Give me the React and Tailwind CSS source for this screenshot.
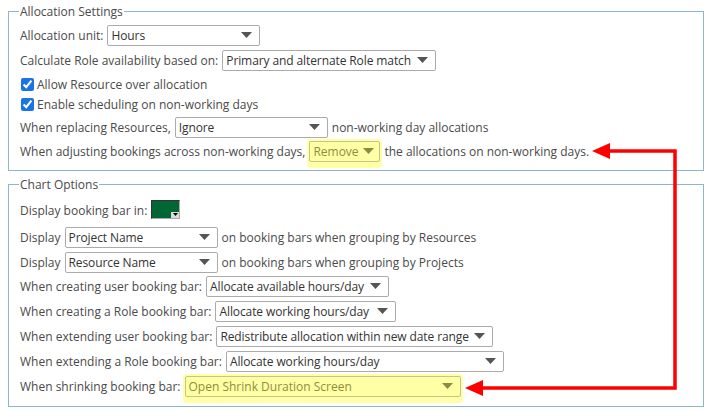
import React from "react";

function Arrow({ color }) {
  return (
    <svg width="11" height="6" viewBox="0 0 11 6" className="ml-[4px] shrink-0">
      <path d="M0 0 L11 0 L5.5 6 Z" fill={color} />
    </svg>
  );
}

function Select({ value, w, hl }) {
  if (hl) {
    return (
      <div
        className={`flex h-[21px] shrink-0 items-center justify-between rounded-[2px] border border-[#c4c48c] bg-[#ffffa6] pl-[3px] pr-[7px] text-[#8e8e3e] shadow-[0_0_0_2px_#ffffa6,0_4px_0_2px_#ffffa6] ${w}`}
      >
        <span className="whitespace-nowrap">{value}</span>
        <Arrow color="#8a8a45" />
      </div>
    );
  }
  return (
    <div
      className={`flex h-[21px] shrink-0 items-center justify-between rounded-[2px] border border-[#ababab] bg-white pl-[3px] pr-[7px] text-[#333] ${w}`}
    >
      <span className="whitespace-nowrap tracking-[-0.1px]">{value}</span>
      <Arrow color="#555" />
    </div>
  );
}

function Row({ children, cls = "" }) {
  return (
    <div className={`flex h-[24px] items-center gap-[4px] whitespace-nowrap ${cls}`}>
      {children}
    </div>
  );
}

function Check({ label, cls = "" }) {
  return (
    <div className={`flex h-[20px] items-center gap-[3px] whitespace-nowrap ${cls}`}>
      <input
        type="checkbox"
        defaultChecked
        className="m-0 ml-[1px] h-[13px] w-[13px] accent-[#1a73e8]"
      />
      <span>{label}</span>
    </div>
  );
}

export default function App() {
  return (
    <div
      className="relative h-[411px] w-[717px] overflow-hidden bg-white text-[12px] leading-[17px] text-[#4a4a4a]"
      style={{ fontFamily: '"Open Sans", "Liberation Sans", sans-serif' }}
    >
      <div className="pl-[8px] pr-[13px] pt-[3px]">
        <fieldset className="border border-[#8db5cc] pb-[7px] pl-[11px] pr-[10px]">
          <legend className="ml-[-1px] px-[1px]">Allocation Settings</legend>
          <Row cls="mt-[3px]">
            <span>Allocation unit:</span>
            <Select value="Hours" w="w-[153px]" />
          </Row>
          <Row cls="mt-[1px]">
            <span>Calculate Role availability based on:</span>
            <Select value="Primary and alternate Role match" w="w-[214px]" />
          </Row>
          <Check label="Allow Resource over allocation" cls="mt-[2px]" />
          <Check label="Enable scheduling on non-working days" />
          <Row cls="mt-[1px]">
            <span>When replacing Resources,</span>
            <Select value="Ignore" w="w-[153px]" />
            <span>non-working day allocations</span>
          </Row>
          <Row>
            <span>When adjusting bookings across non-working days,</span>
            <Select value="Remove" w="w-[71px]" hl />
            <span>the allocations on non-working days.</span>
          </Row>
        </fieldset>

        <fieldset className="mt-[5px] border border-[#8db5cc] pb-[8px] pl-[11px] pr-[10px]">
          <legend className="ml-[-1px] px-[1px]">Chart Options</legend>
          <div className="mt-[3px] flex h-[28px] items-center gap-[4px] whitespace-nowrap">
            <span>Display booking bar in:</span>
            <div className="relative mt-[-2px] h-[19px] w-[29px] border border-b-[#aaa] border-l-[#333] border-r-[#aaa] border-t-[#333] bg-[#006633]">
              <div className="absolute bottom-0 right-0 flex h-[6px] w-[8px] items-center justify-center bg-[#dcdcdc]">
                <svg width="5" height="3" viewBox="0 0 5 3">
                  <path d="M0 0 L5 0 L2.5 3 Z" fill="#000" />
                </svg>
              </div>
            </div>
          </div>
          <Row cls="mt-[1px]">
            <span>Display</span>
            <Select value="Project Name" w="w-[153px]" />
            <span>on booking bars when grouping by Resources</span>
          </Row>
          <Row cls="mt-[1px]">
            <span>Display</span>
            <Select value="Resource Name" w="w-[153px]" />
            <span>on booking bars when grouping by Projects</span>
          </Row>
          <Row>
            <span>When creating user booking bar:</span>
            <Select value="Allocate available hours/day" w="w-[183px]" />
          </Row>
          <Row cls="mt-[1px]">
            <span>When creating a Role booking bar:</span>
            <Select value="Allocate working hours/day" w="w-[181px]" />
          </Row>
          <Row cls="mt-[1px]">
            <span>When extending user booking bar:</span>
            <Select value="Redistribute allocation within new date range" w="w-[277px]" />
          </Row>
          <Row cls="mt-[1px]">
            <span>When extending a Role booking bar:</span>
            <Select value="Allocate working hours/day" w="w-[278px]" />
          </Row>
          <Row cls="mt-[1px]">
            <span>When shrinking booking bar:</span>
            <Select value="Open Shrink Duration Screen" w="w-[276px]" hl />
          </Row>
        </fieldset>
      </div>

      <svg
        className="pointer-events-none absolute left-0 top-0"
        width="717"
        height="411"
        viewBox="0 0 717 411"
      >
        <path
          d="M606 151 L675 151 L675 388 L480 388"
          fill="none"
          stroke="#ff0000"
          strokeWidth="3.5"
        />
        <path d="M592 151 L610 143 L610 159 Z" fill="#ff0000" />
        <path d="M465 388 L483 380 L483 396 Z" fill="#ff0000" />
      </svg>
    </div>
  );
}
